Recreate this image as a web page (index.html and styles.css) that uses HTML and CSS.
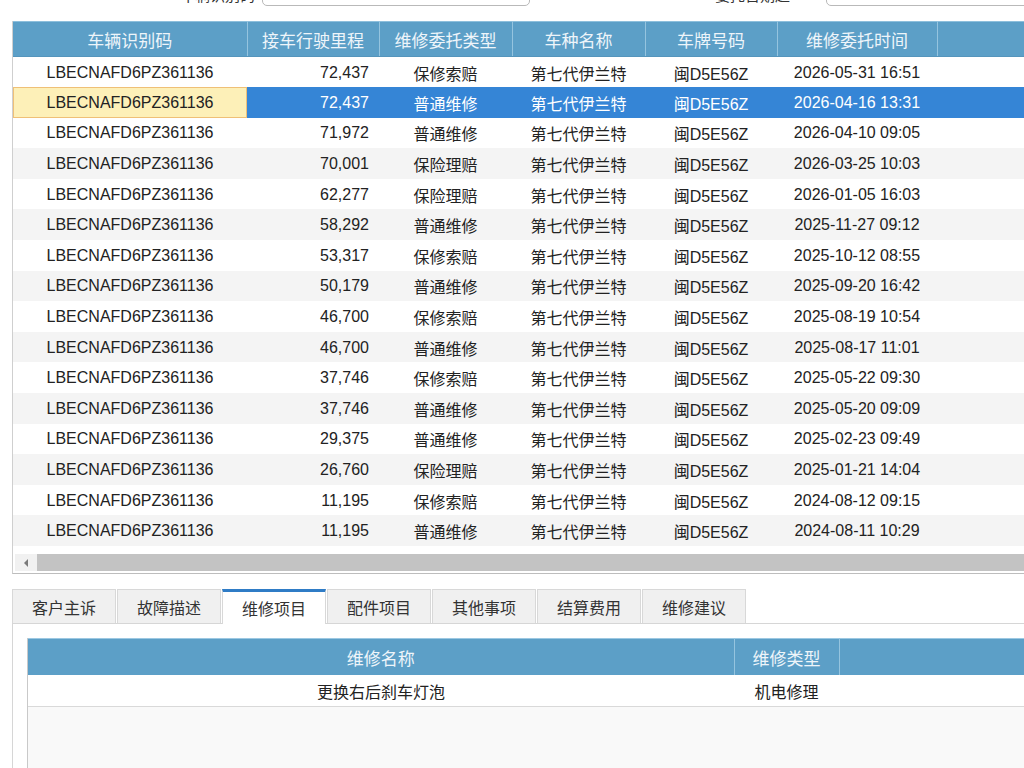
FILE: index.html
```html
<!DOCTYPE html>
<html>
<head>
  <meta charset="utf-8">
  <link rel="stylesheet" href="styles.css">
</head>
<body>
  <div class="filters">
    <label class="filter-label first">车辆识别码</label>
    <input class="filter-input first" type="text">
    <label class="filter-label second">委托日期起</label>
    <input class="filter-input second" type="text">
  </div>

  <div class="grid">
    <table class="grid-table">
      <colgroup>
        <col style="width:234px">
        <col style="width:132px">
        <col style="width:133px">
        <col style="width:133px">
        <col style="width:132px">
        <col style="width:160px">
        <col>
      </colgroup>
      <thead>
        <tr>
          <th>车辆识别码</th>
          <th>接车行驶里程</th>
          <th>维修委托类型</th>
          <th>车种名称</th>
          <th>车牌号码</th>
          <th>维修委托时间</th>
          <th></th>
        </tr>
      </thead>
      <tbody>
        <tr><td>LBECNAFD6PZ361136</td><td class="num">72,437</td><td>保修索赔</td><td>第七代伊兰特</td><td>闽D5E56Z</td><td>2026-05-31 16:51</td><td></td></tr>
        <tr class="selected"><td class="current">LBECNAFD6PZ361136</td><td class="num">72,437</td><td>普通维修</td><td>第七代伊兰特</td><td>闽D5E56Z</td><td>2026-04-16 13:31</td><td></td></tr>
        <tr><td>LBECNAFD6PZ361136</td><td class="num">71,972</td><td>普通维修</td><td>第七代伊兰特</td><td>闽D5E56Z</td><td>2026-04-10 09:05</td><td></td></tr>
        <tr><td>LBECNAFD6PZ361136</td><td class="num">70,001</td><td>保险理赔</td><td>第七代伊兰特</td><td>闽D5E56Z</td><td>2026-03-25 10:03</td><td></td></tr>
        <tr><td>LBECNAFD6PZ361136</td><td class="num">62,277</td><td>保险理赔</td><td>第七代伊兰特</td><td>闽D5E56Z</td><td>2026-01-05 16:03</td><td></td></tr>
        <tr><td>LBECNAFD6PZ361136</td><td class="num">58,292</td><td>普通维修</td><td>第七代伊兰特</td><td>闽D5E56Z</td><td>2025-11-27 09:12</td><td></td></tr>
        <tr><td>LBECNAFD6PZ361136</td><td class="num">53,317</td><td>保修索赔</td><td>第七代伊兰特</td><td>闽D5E56Z</td><td>2025-10-12 08:55</td><td></td></tr>
        <tr><td>LBECNAFD6PZ361136</td><td class="num">50,179</td><td>普通维修</td><td>第七代伊兰特</td><td>闽D5E56Z</td><td>2025-09-20 16:42</td><td></td></tr>
        <tr><td>LBECNAFD6PZ361136</td><td class="num">46,700</td><td>保修索赔</td><td>第七代伊兰特</td><td>闽D5E56Z</td><td>2025-08-19 10:54</td><td></td></tr>
        <tr><td>LBECNAFD6PZ361136</td><td class="num">46,700</td><td>普通维修</td><td>第七代伊兰特</td><td>闽D5E56Z</td><td>2025-08-17 11:01</td><td></td></tr>
        <tr><td>LBECNAFD6PZ361136</td><td class="num">37,746</td><td>保修索赔</td><td>第七代伊兰特</td><td>闽D5E56Z</td><td>2025-05-22 09:30</td><td></td></tr>
        <tr><td>LBECNAFD6PZ361136</td><td class="num">37,746</td><td>普通维修</td><td>第七代伊兰特</td><td>闽D5E56Z</td><td>2025-05-20 09:09</td><td></td></tr>
        <tr><td>LBECNAFD6PZ361136</td><td class="num">29,375</td><td>普通维修</td><td>第七代伊兰特</td><td>闽D5E56Z</td><td>2025-02-23 09:49</td><td></td></tr>
        <tr><td>LBECNAFD6PZ361136</td><td class="num">26,760</td><td>保险理赔</td><td>第七代伊兰特</td><td>闽D5E56Z</td><td>2025-01-21 14:04</td><td></td></tr>
        <tr><td>LBECNAFD6PZ361136</td><td class="num">11,195</td><td>保修索赔</td><td>第七代伊兰特</td><td>闽D5E56Z</td><td>2024-08-12 09:15</td><td></td></tr>
        <tr><td>LBECNAFD6PZ361136</td><td class="num">11,195</td><td>普通维修</td><td>第七代伊兰特</td><td>闽D5E56Z</td><td>2024-08-11 10:29</td><td></td></tr>
      </tbody>
    </table>
    <div class="hscroll">
      <div class="hscroll-btn"><span class="arrow-left"></span></div>
      <div class="hscroll-thumb"></div>
    </div>
  </div>

  <div class="tabs">
    <div class="tab">客户主诉</div>
    <div class="tab">故障描述</div>
    <div class="tab active">维修项目</div>
    <div class="tab">配件项目</div>
    <div class="tab">其他事项</div>
    <div class="tab">结算费用</div>
    <div class="tab">维修建议</div>
  </div>

  <div class="tab-panel">
    <div class="sub-grid">
      <table class="sub-table">
        <colgroup>
          <col style="width:706px">
          <col style="width:105px">
          <col>
        </colgroup>
        <thead>
          <tr><th>维修名称</th><th>维修类型</th><th></th></tr>
        </thead>
        <tbody>
          <tr><td>更换右后刹车灯泡</td><td>机电修理</td><td></td></tr>
        </tbody>
      </table>
      <div class="sub-empty"></div>
    </div>
  </div>
</body>
</html>
```

FILE: styles.css
```css
html, body {
    margin: 0;
    padding: 0;
    background: #fff;
    overflow: hidden;
    height: 768px;
}
body {
    font-family: "Liberation Sans", "Noto Sans CJK SC", sans-serif;
    font-size: 16px;
    color: #222;
}

/* filter bar, mostly scrolled out of view */
.filters {
    height: 6px;
    overflow: hidden;
    display: flex;
    align-items: flex-end;
}
.filters > * {
    flex-shrink: 0;
}
.filter-label {
    font-size: 15px;
    line-height: 18px;
    color: #333;
    text-align: right;
    margin-bottom: 1px;
}
.filter-label.first {
    margin-left: 175px;
    width: 80px;
}
.filter-label.second {
    margin-left: 180px;
    width: 80px;
}
.filter-input {
    height: 26px;
    box-sizing: border-box;
    border: 1px solid #b9b9b9;
    border-radius: 5px;
    background: #fff;
    margin: 0;
}
.filter-input.first {
    margin-left: 7px;
    width: 268px;
}
.filter-input.second {
    margin-left: 36px;
    width: 240px;
}

/* main grid */
.grid {
    margin: 15px 0 0 12px;
    width: 1100px;
    border-left: 1px solid #cfcfcf;
    border-bottom: 1px solid #bdbdbd;
}
.grid-table {
    width: 1100px;
    table-layout: fixed;
    border-collapse: collapse;
}
.grid-table th {
    height: 34px;
    padding: 0;
    background: #5c9fc7;
    color: #eef5fa;
    font-weight: normal;
    font-size: 17px;
    border-top: 1px solid #8dbfdc;
    border-right: 1px solid #95c4df;
    border-bottom: 1px solid #5595bc;
}
.grid-table td {
    height: 30.6px;
    padding: 1px 10px 0;
    text-align: center;
    white-space: nowrap;
    box-sizing: border-box;
}
.grid-table td.num {
    text-align: right;
}
.grid-table tbody tr:nth-child(even) td {
    background: #f4f4f4;
}
.grid-table tbody tr.selected td {
    background: #3585d6;
    color: #fff;
}
.grid-table tbody tr.selected td.current {
    background: #fdf0b8;
    color: #222;
    box-shadow: inset 0 0 0 1px #efc077;
}

.hscroll {
    height: 27px;
    display: flex;
    align-items: flex-start;
    padding-top: 8px;
    box-sizing: border-box;
}
.hscroll-btn {
    width: 22px;
    height: 17px;
    margin-left: 2px;
    background: #f1f1f1;
    display: flex;
    align-items: center;
    justify-content: center;
}
.arrow-left {
    width: 0;
    height: 0;
    border-top: 4px solid transparent;
    border-bottom: 4px solid transparent;
    border-right: 4px solid #7a7a7a;
}
.hscroll-thumb {
    flex: 1;
    height: 17px;
    background: #c3c3c3;
}

/* tabs */
.tabs {
    display: flex;
    margin: 15px 0 0 12px;
    border-bottom: 1px solid #d6d6d6;
    height: 34px;
}
.tab {
    width: 104px;
    box-sizing: border-box;
    height: 34px;
    line-height: 32px;
    padding-top: 3px;
    text-align: center;
    font-size: 16px;
    color: #333;
    background: #f0f0f0;
    border: 1px solid #d8d8d8;
    border-bottom: none;
    margin-right: 1px;
}
.tab.active {
    background: #fff;
    border-top: 3px solid #2f7cc6;
    padding-top: 1px;
    height: 35px;
    line-height: 33px;
    margin-bottom: -1px;
}

.tab-panel {
    margin-left: 12px;
    border-left: 1px solid #d6d6d6;
    padding: 14px 0 0 14px;
    height: 200px;
}
.sub-grid {
    border-left: 1px solid #c9c9c9;
    width: 1000px;
}
.sub-table {
    width: 100%;
    table-layout: fixed;
    border-collapse: collapse;
}
.sub-table th {
    height: 36px;
    padding: 0;
    background: #5c9fc7;
    color: #eef5fa;
    font-weight: normal;
    font-size: 17px;
    border-top: 1px solid #9cc8e2;
    border-right: 1px solid #95c4df;
}
.sub-table td {
    height: 31px;
    padding: 0;
    text-align: center;
    background: #fff;
    border-bottom: 1px solid #d9d9d9;
}
.sub-empty {
    height: 80px;
    background: #f9f9f9;
    border-right: 1px solid #dedede;
}
```
